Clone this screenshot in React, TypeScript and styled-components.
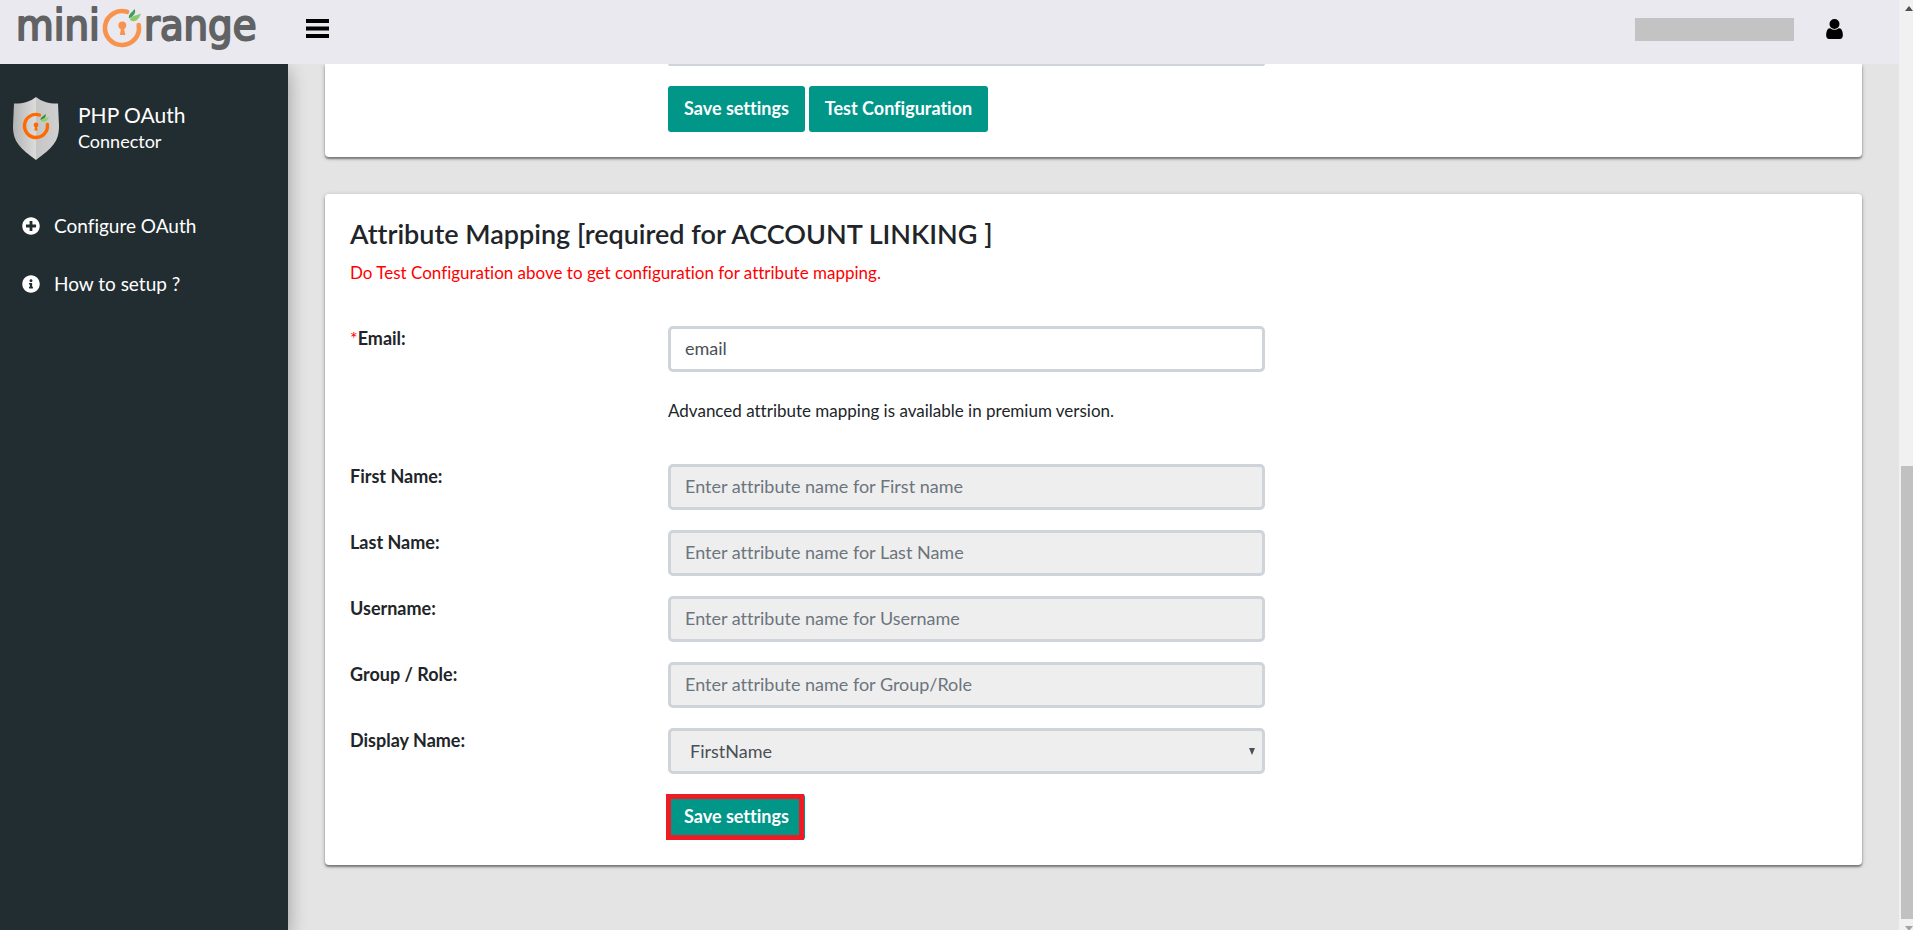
import React from "react";
import styled, { createGlobalStyle } from "styled-components";
import { FaPlusCircle, FaInfoCircle } from "react-icons/fa";

const GlobalStyle = createGlobalStyle`
  *, *::before, *::after { box-sizing: border-box; }
  html, body, #root { height: 100%; }
  body {
    margin: 0;
    background: #e4e4e4;
    color: #212529;
    font-family: Lato, "Liberation Sans", sans-serif;
    font-size: 18px;
    font-variant-ligatures: none;
    line-height: 26px;
    overflow: hidden;
  }
`;

const Page = styled.div`
  display: grid;
  grid-template-columns: minmax(0, 1fr) 14px;
  height: 100vh;
`;

const Shell = styled.div`
  display: flex;
  flex-direction: column;
  min-height: 0;
`;

const Header = styled.header`
  display: flex;
  align-items: center;
  flex: none;
  height: 64px;
  padding-right: 56px;
  background: #e9e9ef;
  z-index: 2;
`;

const Brand = styled.a`
  display: block;
  width: 288px;
  height: 64px;
`;

const BrandSvg = styled.svg`
  display: block;
`;

const Wordmark = styled.text`
  font-family: "DejaVu Sans Condensed", "DejaVu Sans", sans-serif;
  font-size: 43px;
  fill: #616264;
  stroke: #616264;
  stroke-width: 2;
  stroke-linejoin: round;
`;

const IconButton = styled.button`
  display: flex;
  padding: 0;
  border: 0;
  background: none;
  color: #000;
  cursor: pointer;
`;

const MenuButton = styled(IconButton)`
  margin: 0 auto 7px 18px;
`;

const UserButton = styled(IconButton)`
  margin: 0 0 6px 32px;
`;

const AccountName = styled.div`
  width: 159px;
  height: 23px;
  margin-bottom: 5px;
  background: #c3c3c3;
`;

const Body = styled.div`
  display: flex;
  flex: 1;
  min-height: 0;
`;

const Sidebar = styled.aside`
  flex: none;
  width: 288px;
  padding: 32px 12px;
  background: #222d32;
  color: #fff;
  box-shadow: 0 8px 17px rgba(0, 0, 0, 0.2), 0 6px 20px rgba(0, 0, 0, 0.15);
  z-index: 1;
`;

const Product = styled.div`
  display: flex;
  gap: 18px;
  height: 66px;
  margin-bottom: 35px;
`;

const ProductText = styled.div`
  padding-top: 6px;
`;

const ProductName = styled.div`
  font-size: 21px;
`;

const ProductKind = styled.div`
  font-size: 18px;
`;

const NavLink = styled.a`
  display: flex;
  align-items: center;
  gap: 14px;
  height: 58px;
  padding-left: 10px;
  color: #fff;
  font-size: 19px;
  text-decoration: none;
`;

const Main = styled.main`
  flex: 1;
  min-width: 0;
  padding: 0 37px;
  overflow: hidden;
`;

const Card = styled.section`
  margin-bottom: 37px;
  padding: 25px;
  border-radius: 4px;
  background: #fff;
  box-shadow: 0 2px 2px rgba(0, 0, 0, 0.4), 0 1px 5px rgba(0, 0, 0, 0.2);
`;

const ClippedCard = styled(Card)`
  padding-top: 0;
  border-top-left-radius: 0;
  border-top-right-radius: 0;
`;

const Title = styled.h2`
  margin: 0 0 11px;
  font-size: 27px;
  font-weight: 600;
  line-height: 30px;
`;

const Warning = styled.p`
  margin: 0 0 40px;
  color: #f00;
  font-size: 17px;
`;

const Field = styled.div`
  display: grid;
  grid-template-columns: 318px minmax(0, 597px);
  margin-bottom: 20px;
`;

const Label = styled.label`
  font-weight: 700;
  line-height: 24px;
`;

const Required = styled.span`
  color: #f00;
  font-weight: 400;
`;

const Input = styled.input`
  width: 100%;
  height: 46px;
  padding: 0 14px 2px;
  border: 3px solid #ced4da;
  border-radius: 5px;
  background: #fff;
  color: #495057;
  font: inherit;
  &:disabled { background: #eee; }
  &::placeholder { color: #6c757d; opacity: 1; }
`;

const InputTail = styled.div`
  grid-column: 2;
  height: 2px;
  border-radius: 0 0 5px 5px;
  background: #ced4da;
`;

const SelectBox = styled.div`
  display: grid;
  align-items: center;
  & > * { grid-area: 1 / 1; }
`;

const Select = styled.select`
  appearance: none;
  width: 100%;
  height: 46px;
  padding: 0 19px;
  border: 3px solid #ced4da;
  border-radius: 5px;
  background: #eee;
  color: #495057;
  font: inherit;
  opacity: 1;
`;

const Arrow = styled.svg`
  justify-self: end;
  margin-right: 10px;
  pointer-events: none;
`;

const Note = styled.p`
  grid-column: 2;
  margin: 6px 0 20px;
  font-size: 17px;
`;

const Actions = styled.div`
  grid-column: 2;
  display: flex;
  gap: 4px;
`;

const Button = styled.button`
  height: 46px;
  padding: 0 16px 2px;
  border: 0;
  border-radius: 3px;
  background: #009688;
  color: #fff;
  font: inherit;
  font-weight: 700;
  cursor: pointer;
`;

const MarkedButton = styled(Button)`
  position: relative;
  &::after {
    content: "";
    position: absolute;
    inset: 0 1px 0 -2px;
    border: 5px solid #ed1c24;
  }
`;

const LastField = styled(Field)`
  margin-bottom: 0;
`;

const Scrollbar = styled.div`
  display: flex;
  flex-direction: column;
  justify-content: space-between;
  padding: 6px 0 0 2px;
  background: #f1f1f1;
`;

const ScrollArrow = styled.svg`
  display: block;
  flex: none;
  margin-left: 4px;
`;

const Thumb = styled.div`
  height: 49%;
  margin: auto 0 7px;
  background: #c1c1c1;
`;

function BrandLogo() {
  return (
    <BrandSvg width="288" height="64" role="img" aria-label="miniOrange">
      <Wordmark x="16" y="40">mini</Wordmark>
      <Wordmark x="144" y="40">range</Wordmark>
      <path d="M127 11.800A17 17 0 1 0 138.700 25" fill="none" stroke="#f7934c" strokeWidth="4.600" strokeLinecap="round" />
      <circle cx="122.300" cy="25.300" r="3.900" fill="#f7934c" />
      <path d="M121.200 27h2.500l1.600 8h-5.400z" fill="#f7934c" />
      <path d="M129 18.500C128 14 132 13 134.500 9C136.500 12 134 16 129 18.500z" fill="#3f9b5f" />
      <path d="M130 20C130 15.500 136 16 141 13.500C138.500 20 135 23 130 20z" fill="#8cc96b" />
    </BrandSvg>
  );
}

function Shield() {
  return (
    <svg width="48" height="66" viewBox="0 0 48 66" aria-hidden="true">
      <defs>
        <linearGradient id="shieldLeft">
          <stop offset="0" stopColor="#b4b4b4" />
          <stop offset="1" stopColor="#dcdcdc" />
        </linearGradient>
        <linearGradient id="shieldRight">
          <stop offset="0" stopColor="#c6c6c6" />
          <stop offset="1" stopColor="#d0d0d0" />
        </linearGradient>
      </defs>
      <path d="M24 1C18 6 9 8 2 7.500L1 30C1 46 8 52 24 64z" fill="url(#shieldLeft)" />
      <path d="M24 1C30 6 39 8 46 7.500L47 30C47 46 40 52 24 64z" fill="url(#shieldRight)" />
      <path d="M27.500 19A11.500 11.500 0 1 0 35.400 28.500" fill="none" stroke="#ff6a00" strokeWidth="3.400" strokeLinecap="round" />
      <circle cx="24" cy="29" r="2.400" fill="#ff6a00" />
      <path d="M23.200 30h1.600l.9 4.500h-3.400z" fill="#ff6a00" />
      <path d="M28.500 24C28.500 21 31.500 20.500 33.500 18C34.500 21 32 23 28.500 24z" fill="#2f8a3c" />
      <path d="M29 25C30 22 33.500 22.500 37 20.500C35.500 25.500 32.500 27 29 25z" fill="#8ed06b" />
    </svg>
  );
}

const fields = [
  ["first", "First Name:", "Enter attribute name for First name"],
  ["last", "Last Name:", "Enter attribute name for Last Name"],
  ["username", "Username:", "Enter attribute name for Username"],
  ["group", "Group / Role:", "Enter attribute name for Group/Role"],
];

export default function App() {
  return (
    <Page>
      <GlobalStyle />
      <Shell>
        <Header>
          <Brand href="#"><BrandLogo /></Brand>
          <MenuButton aria-label="Menu">
            <svg width="23" height="19"><path d="M0 0h23v4H0zM0 7.500h23v4H0zM0 15h23v4H0z" /></svg>
          </MenuButton>
          <AccountName />
          <UserButton aria-label="Account">
            <svg width="17" height="20" viewBox="0 128 1280 1536" fill="currentColor">
              <path d="M1280 1399q0 109-62.500 187t-150.500 78h-854q-88 0-150.500-78t-62.500-187q0-85 8.500-160.500t31.500-152 58.500-131 94-89 134.500-34.500q131 128 313 128t313-128q76 0 134.500 34.500t94 89 58.500 131 31.500 152 8.500 160.500zm-256-887q0 159-112.500 271.500t-271.500 112.500-271.500-112.500-112.500-271.500 112.500-271.500 271.500-112.500 271.500 112.500 112.500 271.500z" />
            </svg>
          </UserButton>
        </Header>
        <Body>
          <Sidebar>
            <Product>
              <Shield />
              <ProductText>
                <ProductName>PHP OAuth</ProductName>
                <ProductKind>Connector</ProductKind>
              </ProductText>
            </Product>
            <nav>
              <NavLink href="#"><FaPlusCircle size={18} />Configure OAuth</NavLink>
              <NavLink href="#"><FaInfoCircle size={18} />How to setup ?</NavLink>
            </nav>
          </Sidebar>
          <Main>
            <ClippedCard>
              <Field><InputTail /></Field>
              <LastField>
                <Actions>
                  <Button>Save settings</Button>
                  <Button>Test Configuration</Button>
                </Actions>
              </LastField>
            </ClippedCard>
            <Card>
              <Title>Attribute Mapping [required for ACCOUNT LINKING ]</Title>
              <Warning>Do Test Configuration above to get configuration for attribute mapping.</Warning>
              <Field>
                <Label htmlFor="email"><Required>*</Required>Email:</Label>
                <Input id="email" defaultValue="email" />
              </Field>
              <Field>
                <Note>Advanced attribute mapping is available in premium version.</Note>
              </Field>
              {fields.map(([id, label, hint]) => (
                <Field key={id}>
                  <Label htmlFor={id}>{label}</Label>
                  <Input id={id} placeholder={hint} disabled />
                </Field>
              ))}
              <Field>
                <Label htmlFor="display">Display Name:</Label>
                <SelectBox>
                  <Select id="display" disabled><option>FirstName</option></Select>
                  <Arrow width="6" height="7"><path d="M0 0h6L3 7z" fill="#495057" /></Arrow>
                </SelectBox>
              </Field>
              <LastField>
                <Actions><MarkedButton>Save settings</MarkedButton></Actions>
              </LastField>
            </Card>
          </Main>
        </Body>
      </Shell>
      <Scrollbar aria-hidden="true">
        <ScrollArrow width="8" height="5"><path d="M0 5h8L4 0z" fill="#505050" /></ScrollArrow>
        <Thumb />
        <ScrollArrow width="8" height="4"><path d="M0 0h8L4 5z" fill="#a3a3a3" /></ScrollArrow>
      </Scrollbar>
    </Page>
  );
}
